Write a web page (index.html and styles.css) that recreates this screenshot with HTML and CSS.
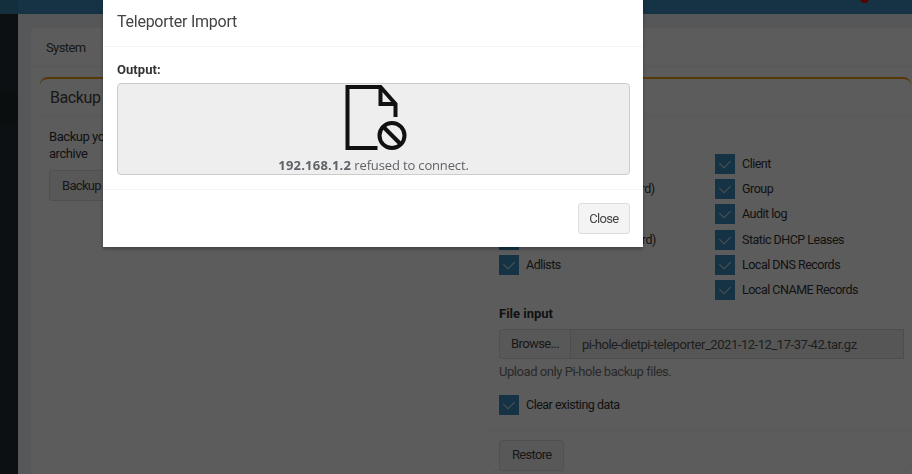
FILE: index.html
```html
<!DOCTYPE html>
<html lang="en">
<head>
<meta charset="utf-8">
<title>Teleporter</title>
<link rel="stylesheet" href="styles.css">
</head>
<body>
<div class="page">
  <header class="topbar"><span class="topbar-logo"></span><span class="alert-dot"></span></header>
  <div class="shell">
    <aside class="sidebar"><div class="side-item"></div><div class="side-active"></div></aside>
    <main class="content">
      <section class="tabs">
        <nav class="tab-bar"><span class="tab">System</span></nav>
        <div class="tab-pane">
          <section class="box box-left">
            <h3 class="box-title">Backup</h3>
            <div class="box-body left-body">
              <p class="para">Backup your Pi-hole configuration (settings &amp; lists) as a downloadable<br>archive</p>
              <button class="btn">Backup</button>
            </div>
          </section>
          <section class="box box-right">
            <h3 class="box-title">Restore</h3>
            <div class="box-body">
              <div class="checks">
                <div class="check-col">
                  <label class="check"><span class="tick"></span>Blacklist (exact)</label>
                  <label class="check"><span class="tick"></span>Blacklist (regex/wildcard)</label>
                  <label class="check"><span class="tick"></span>Whitelist (exact)</label>
                  <label class="check"><span class="tick"></span>Whitelist (regex/wildcard)</label>
                  <label class="check"><span class="tick"></span>Adlists</label>
                </div>
                <div class="check-col">
                  <label class="check"><span class="tick"></span>Client</label>
                  <label class="check"><span class="tick"></span>Group</label>
                  <label class="check"><span class="tick"></span>Audit log</label>
                  <label class="check"><span class="tick"></span>Static DHCP Leases</label>
                  <label class="check"><span class="tick"></span>Local DNS Records</label>
                  <label class="check"><span class="tick"></span>Local CNAME Records</label>
                </div>
              </div>
              <div class="file-label">File input</div>
              <div class="file-group">
                <span class="browse">Browse...</span>
                <span class="file-name">pi-hole-dietpi-teleporter_2021-12-12_17-37-42.tar.gz</span>
              </div>
              <p class="help">Upload only Pi-hole backup files.</p>
              <label class="check clear"><span class="tick"></span>Clear existing data</label>
            </div>
            <div class="box-footer"><button class="btn">Restore</button></div>
          </section>
        </div>
      </section>
    </main>
  </div>
</div>
<div class="backdrop"></div>
<div class="modal">
  <div class="modal-header">Teleporter Import</div>
  <div class="modal-body">
    <div class="output-label">Output:</div>
    <div class="frame">
      <svg class="sad-doc" viewBox="340.5 85 66 65" width="66" height="65" aria-hidden="true">
        <path d="M377 148H347V87H380L395 104V117" fill="none" stroke="#111" stroke-width="4"/>
        <path d="M380 87V104H395" fill="none" stroke="#111" stroke-width="4"/>
        <circle cx="391.5" cy="135.5" r="12.5" fill="none" stroke="#111" stroke-width="4"/>
        <path d="M383 127L400 144" fill="none" stroke="#111" stroke-width="4"/>
      </svg>
      <div class="refused"><b class="host">192.168.1.2</b> refused to connect.</div>
    </div>
  </div>
  <div class="modal-footer"><button class="btn btn-close">Close</button></div>
</div>
</body>
</html>
```
FILE: styles.css
```css
* { box-sizing: border-box; }
html, body { margin: 0; height: 474px; overflow: hidden; }
body { font: 13px/20px Roboto, "Liberation Sans", sans-serif; letter-spacing: -.45px; color: #333; background: #ecf0f5; }

.page { height: 474px; display: flex; flex-direction: column; }
.topbar { height: 14px; flex: none; background: #3c8dbc; display: flex; position: relative; }
.topbar-logo { width: 18px; background: #367fa9; }
.alert-dot { position: absolute; left: 860px; top: -6px; width: 9px; height: 9px; border-radius: 50%; background: #e00; }

.shell { flex: 1; display: flex; min-height: 0; }
.sidebar { width: 18px; flex: none; background: #222d32; }
.side-item { height: 78px; }
.side-active { height: 33px; background: #1e282c; }
.content { flex: 1; min-width: 0; padding: 14px 0 0 13px; }

.tabs { background: #fff; border-radius: 3px 0 0 0; height: 100%; }
.tab-bar { height: 39px; border-bottom: 1px solid #f4f4f4; padding: 10px 15px; color: #444; letter-spacing: -.6px; }
.tab-pane { display: flex; gap: 10px; padding: 10px 0 0 9px; align-items: flex-start; }

.box { flex: none; border-top: 2px solid #f39c12; border-radius: 8px; box-shadow: 0 0 1px #d8d8d8; background: #fff; }
.box-left { width: 440px; height: 134px; }
.box-right { width: 421px; }
.box-title { margin: 0; height: 38px; padding: 9px 10px; font-size: 16px; line-height: 20px; font-weight: 400; letter-spacing: -.4px; border-bottom: 1px solid #f4f4f4; color: #444; }
.box-body { padding: 37px 9px 0; }
.left-body { padding: 11px 10px 0 9px; }
.para { margin: 0 0 8px; line-height: 17px; }

.btn { font: inherit; letter-spacing: -.7px; height: 31px; padding: 0 12px; background: #f4f4f4; border: 1px solid #ddd; border-radius: 3px; color: #444; }
.btn-close { padding: 0 10.5px; }

.checks { display: flex; }
.check-col { width: 216px; flex: none; display: flex; flex-direction: column; gap: 5.2px; }
.check { display: flex; align-items: center; gap: 7px; height: 20px; font-size: 12.5px; letter-spacing: -.5px; }
.tick { width: 20px; height: 20px; flex: none; background: #3c8dbc; display: flex; align-items: center; justify-content: center; }
.tick::after { content: ""; width: 9px; height: 6px; margin-top: -3px; border-left: 1px solid rgba(255, 255, 255, .75); border-bottom: 1px solid rgba(255, 255, 255, .75); transform: rotate(-45deg); }

.file-label { margin-top: 4px; font-weight: 700; letter-spacing: 0; }
.file-group { margin: 5px -2px 0 0; display: flex; height: 30px; }
.browse { width: 72px; flex: none; background: #f4f4f4; border: 1px solid #ddd; border-radius: 3px 0 0 3px; color: #444; letter-spacing: -.6px; text-align: center; line-height: 28px; }
.file-name { flex: 1; margin-left: -1px; padding: 0 11px; background: #eee; border: 1px solid #d2d6de; color: #555; line-height: 29px; white-space: nowrap; }
.help { margin: 3px 0 0; color: #737373; }
.clear { margin-top: 13px; }

.box-footer { margin-top: 15px; border-top: 1px solid #f4f4f4; padding: 9px 9px 0; }

.backdrop { position: fixed; inset: 0; background: rgba(0, 0, 0, .64); }
.modal { position: fixed; top: 0; left: 103px; width: 540px; height: 247px; background: #fff; box-shadow: 0 2px 4px rgba(0, 0, 0, .3); }
.modal-header { height: 47px; padding: 11px 14px; font-size: 16px; line-height: 21px; letter-spacing: -.25px; color: #444; border-bottom: 1px solid #f4f4f4; }
.modal-body { height: 143px; padding: 13px 13px 0 14px; border-bottom: 1px solid #f4f4f4; }
.output-label { font-size: 13px; font-weight: 700; line-height: 20px; letter-spacing: .05px; margin-bottom: 3px; }
.frame { height: 92px; background: #eee; border: 1px solid #ccc; border-radius: 4px; padding-top: 1px; display: flex; flex-direction: column; align-items: center; }
.sad-doc { display: block; flex: none; }
.refused { margin-top: 6px; font: 13px/18px "Open Sans", sans-serif; letter-spacing: -.15px; color: #5f6368; }
.host { letter-spacing: .2px; }
.modal-footer { padding: 13px 13px 0; display: flex; justify-content: flex-end; }
```
